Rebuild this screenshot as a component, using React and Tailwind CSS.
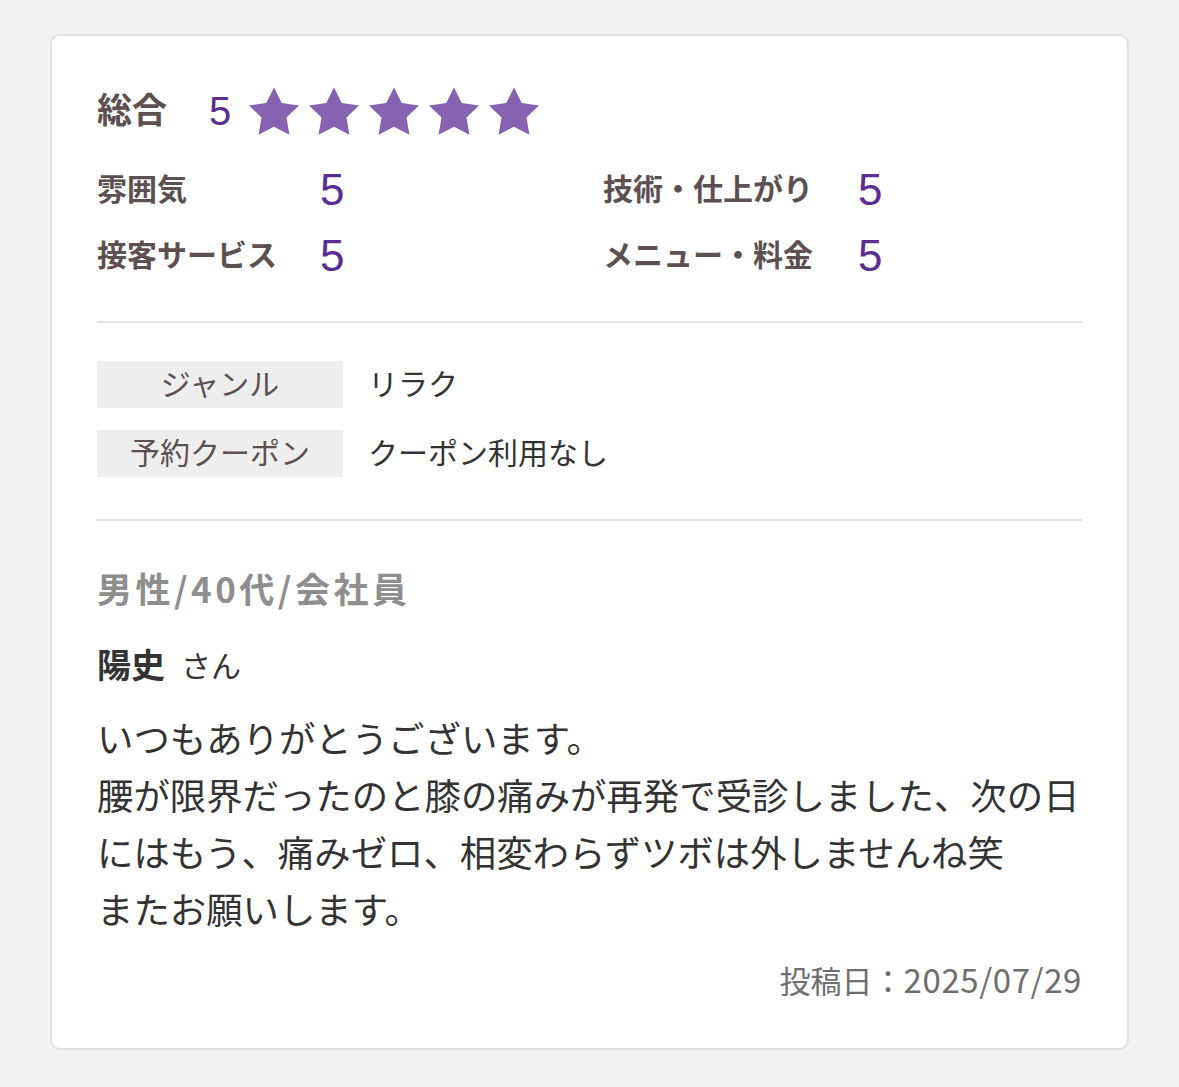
import React from 'react';

const purple = 'text-[#5b2d91]';
const cjk = "font-['Noto_Sans_CJK_JP',sans-serif]";

const Star = () => (
    <svg viewBox="0 0 20 19" className="w-[50px] h-[48px] fill-[#8563b1]">
        <polygon points="10,0 13.09,6.26 20,7.27 15,12.14 16.18,19.02 10,15.77 3.82,19.02 5,12.14 0,7.27 6.91,6.26" />
    </svg>
);

const Rating = ({ label, value, labelWidth }) => (
    <div className="flex items-center h-[56px]">
        <span className={`${labelWidth} text-[30px] font-bold text-[#5c5050] leading-none`}>{label}</span>
        <span className={`text-[44px] leading-none ${purple}`}>{value}</span>
    </div>
);

const Tag = ({ label, value }) => (
    <div className="flex items-center">
        <div className="w-[246px] h-[47px] bg-[#eeeeee] flex items-center justify-center text-[30px] text-[#5c5050]">
            {label}
        </div>
        <div className="ml-[25px] text-[30px] text-[#333333]">{value}</div>
    </div>
);

const App = () => {
    return (
        <div className="min-h-screen bg-[#f3f2f0] pt-[34px] px-[50px] pb-[36px] font-['Liberation_Sans','Noto_Sans_CJK_JP',sans-serif]">
            <div className="bg-white border-2 border-[#e1e1e1] rounded-[10px] px-[45px] pt-[50px] pb-[48px]">
                {/* overall */}
                <div className="flex items-center h-[50px]">
                    <span className="text-[35px] font-bold text-[#5c5050]">総合</span>
                    <span className={`ml-[42px] text-[40px] leading-none ${purple}`}>5</span>
                    <div className="ml-[18px] flex gap-[10px]">
                        <Star />
                        <Star />
                        <Star />
                        <Star />
                        <Star />
                    </div>
                </div>

                {/* detail ratings */}
                <div className="mt-[26px] grid grid-cols-[506px_1fr] gap-y-[10px]">
                    <Rating label="雰囲気" value="5" labelWidth="w-[223px]" />
                    <Rating label="技術・仕上がり" value="5" labelWidth="w-[255px]" />
                    <Rating label="接客サービス" value="5" labelWidth="w-[223px]" />
                    <Rating label="メニュー・料金" value="5" labelWidth="w-[255px]" />
                </div>

                <div className="mt-[37px] h-[2px] bg-[#e2e2e2]" />

                <div className="mt-[38px] flex flex-col gap-[22px]">
                    <Tag label="ジャンル" value="リラク" />
                    <Tag label="予約クーポン" value="クーポン利用なし" />
                </div>

                <div className="mt-[42px] h-[2px] bg-[#e2e2e2]" />

                <div className={`mt-[43px] h-[48px] flex items-center text-[35px] font-bold tracking-[3.5px] text-[#8e8e8e] ${cjk}`}>
                    男性/40代/会社員
                </div>

                <div className="mt-[30px] h-[48px] flex items-center text-[#333333]">
                    <span className="text-[34px] font-bold">陽史</span>
                    <span className="ml-[16px] text-[30px]">さん</span>
                </div>

                <p className="mt-[22px] text-[36.4px] leading-[57px] text-[#333333]">
                    いつもありがとうございます。
                    <br />
                    腰が限界だったのと膝の痛みが再発で受診しました、次の日にはもう、痛みゼロ、相変わらずツボは外しませんね笑
                    <br />
                    またお願いします。
                </p>

                <div className={`mt-[20px] h-[40px] flex items-center justify-end text-[31px] text-[#6e6e6e] ${cjk}`}>
                    投稿日：<span className="text-[33px] tracking-[0.6px]">2025/07/29</span>
                </div>
            </div>
        </div>
    );
};

export default App;
